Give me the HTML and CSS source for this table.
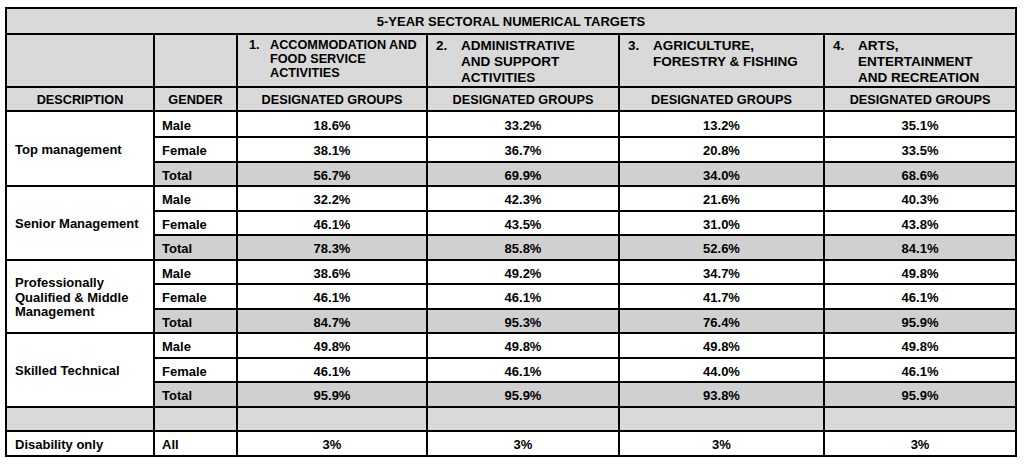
FILE: index.html
```html
<!DOCTYPE html>
<html>
<head>
<meta charset="utf-8">
<link rel="stylesheet" href="styles.css">
</head>
<body>
<table class="targets">
  <colgroup>
    <col class="c-desc"><col class="c-gender"><col class="c-s1"><col class="c-s2"><col class="c-s3"><col class="c-s4">
  </colgroup>
  <tr class="r-title"><th colspan="6">5-YEAR SECTORAL NUMERICAL TARGETS</th></tr>
  <tr class="r-sector">
    <th></th><th></th>
    <th class="sector s-small"><div class="sec"><span class="num n1">1.</span><span class="name">ACCOMMODATION AND<br>FOOD SERVICE<br>ACTIVITIES</span></div></th>
    <th class="sector"><div class="sec"><span class="num">2.</span><span class="name">ADMINISTRATIVE<br>AND SUPPORT<br>ACTIVITIES</span></div></th>
    <th class="sector"><div class="sec"><span class="num">3.</span><span class="name">AGRICULTURE,<br>FORESTRY &amp; FISHING</span></div></th>
    <th class="sector"><div class="sec"><span class="num">4.</span><span class="name">ARTS,<br>ENTERTAINMENT<br>AND RECREATION</span></div></th>
  </tr>
  <tr class="r-head"><th>DESCRIPTION</th><th>GENDER</th><th>DESIGNATED GROUPS</th><th>DESIGNATED GROUPS</th><th>DESIGNATED GROUPS</th><th>DESIGNATED GROUPS</th></tr>

  <tr class="r-data r-first"><td class="desc" rowspan="3">Top management</td><td class="gender">Male</td><td>18.6%</td><td>33.2%</td><td>13.2%</td><td>35.1%</td></tr>
  <tr class="r-data"><td class="gender">Female</td><td>38.1%</td><td>36.7%</td><td>20.8%</td><td>33.5%</td></tr>
  <tr class="r-data r-total"><td class="gender">Total</td><td>56.7%</td><td>69.9%</td><td>34.0%</td><td>68.6%</td></tr>

  <tr class="r-data"><td class="desc" rowspan="3">Senior Management</td><td class="gender">Male</td><td>32.2%</td><td>42.3%</td><td>21.6%</td><td>40.3%</td></tr>
  <tr class="r-data"><td class="gender">Female</td><td>46.1%</td><td>43.5%</td><td>31.0%</td><td>43.8%</td></tr>
  <tr class="r-data r-total"><td class="gender">Total</td><td>78.3%</td><td>85.8%</td><td>52.6%</td><td>84.1%</td></tr>

  <tr class="r-data"><td class="desc" rowspan="3">Professionally<br>Qualified &amp; Middle<br>Management</td><td class="gender">Male</td><td>38.6%</td><td>49.2%</td><td>34.7%</td><td>49.8%</td></tr>
  <tr class="r-data"><td class="gender">Female</td><td>46.1%</td><td>46.1%</td><td>41.7%</td><td>46.1%</td></tr>
  <tr class="r-data r-total"><td class="gender">Total</td><td>84.7%</td><td>95.3%</td><td>76.4%</td><td>95.9%</td></tr>

  <tr class="r-data"><td class="desc" rowspan="3">Skilled Technical</td><td class="gender">Male</td><td>49.8%</td><td>49.8%</td><td>49.8%</td><td>49.8%</td></tr>
  <tr class="r-data"><td class="gender">Female</td><td>46.1%</td><td>46.1%</td><td>44.0%</td><td>46.1%</td></tr>
  <tr class="r-data r-total"><td class="gender">Total</td><td>95.9%</td><td>95.9%</td><td>93.8%</td><td>95.9%</td></tr>

  <tr class="r-data r-blank"><td></td><td></td><td></td><td></td><td></td><td></td></tr>
  <tr class="r-data"><td class="desc">Disability only</td><td class="gender">All</td><td>3%</td><td>3%</td><td>3%</td><td>3%</td></tr>
</table>
</body>
</html>
```

FILE: styles.css
```css
html, body {
  margin: 0;
  padding: 0;
  background: #ffffff;
}

body {
  padding: 7px 0 0 5px;
  font-family: "Liberation Sans", Arial, sans-serif;
  font-weight: bold;
  color: #000;
}

.targets {
  border-collapse: separate;
  border-spacing: 0;
  table-layout: fixed;
  width: 1012px;
  border-left: 2px solid #000;
  border-top: 2px solid #000;
}

.c-desc { width: 148px; }
.c-gender { width: 83px; }
.c-s1 { width: 190px; }
.c-s2 { width: 192px; }
.c-s3 { width: 205px; }
.c-s4 { width: 192px; }

.targets th,
.targets td {
  box-sizing: border-box;
  border-right: 2px solid #000;
  border-bottom: 2px solid #000;
  padding: 0;
  font-size: 13px;
  font-weight: bold;
  text-align: center;
  vertical-align: middle;
  white-space: nowrap;
}

.r-title th {
  height: 26px;
  background: #d9d9d9;
  font-size: 13px;
  padding-top: 1px;
}

.r-sector th {
  height: 52px;
  background: #d9d9d9;
  vertical-align: top;
  text-align: left;
}

.sec {
  display: flex;
  padding: 3px 0 0 8px;
  font-size: 13.5px;
  line-height: 16px;
}

.num {
  width: 25px;
  flex: none;
}

.s-small .sec {
  font-size: 12.7px;
  line-height: 14px;
  padding-top: 3px;
}

.n1 {
  width: 21px;
  padding-left: 3px;
}

.r-head th {
  height: 24px;
  background: #d9d9d9;
  font-size: 12.7px;
  padding-top: 2px;
}

.r-data td {
  height: 24.5px;
  padding-top: 3px;
}

.r-first td {
  height: 26px;
}

.r-total td {
  background: #d0d0d0;
}

.r-blank td {
  background: #d9d9d9;
}

.targets td.gender {
  text-align: left;
  padding-left: 7px;
}

.targets td.desc {
  text-align: left;
  padding-left: 8px;
  background: #ffffff;
  line-height: 14.5px;
}
```
